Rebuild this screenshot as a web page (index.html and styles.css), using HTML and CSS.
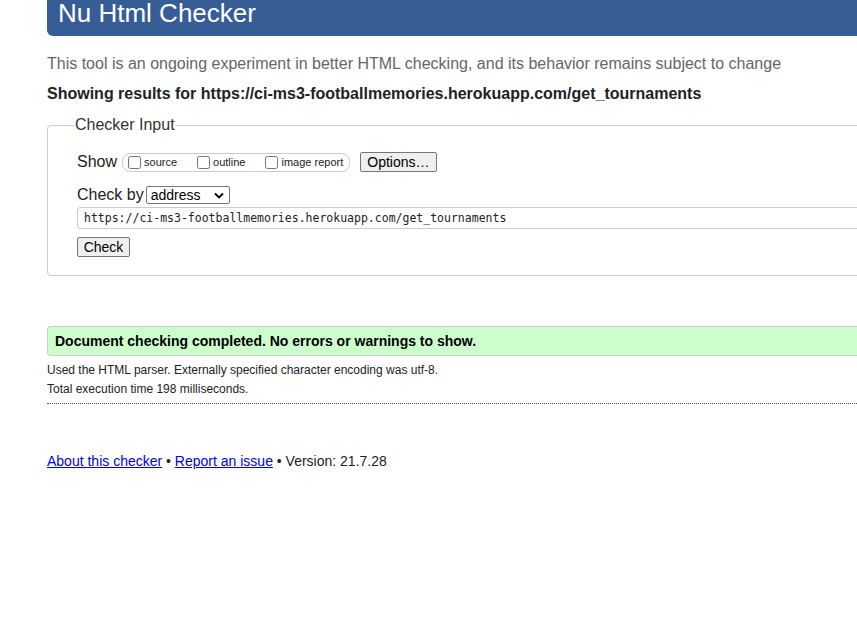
FILE: index.html
```html
<!DOCTYPE html>
<html>
<head>
<meta charset="utf-8">
<title>Nu Html Checker</title>
<link rel="stylesheet" href="styles.css">
</head>
<body>
<div class="page">
  <header class="masthead"><h1>Nu Html Checker</h1></header>
  <p class="intro">This tool is an ongoing experiment in better HTML checking, and its behavior remains subject to change</p>
  <p class="showing">Showing results for https://ci-ms3-footballmemories.herokuapp.com/get_tournaments</p>
  <fieldset class="input">
    <legend>Checker Input</legend>
    <div class="row show-row">
      <span class="lbl">Show</span>
      <span class="opts">
        <label class="opt"><input type="checkbox"><span>source</span></label>
        <label class="opt"><input type="checkbox"><span>outline</span></label>
        <label class="opt last"><input type="checkbox"><span>image report</span></label>
      </span>
      <button class="btn options">Options…</button>
    </div>
    <div class="row by-row">
      <span class="lbl">Check by</span>
      <span class="select">address<svg width="10" height="7" viewBox="0 0 10 7"><path d="M1 1.5 L5 5.5 L9 1.5" fill="none" stroke="#000" stroke-width="1.8"/></svg></span>
    </div>
    <div class="url">https://ci-ms3-footballmemories.herokuapp.com/get_tournaments</div>
    <button class="btn check">Check</button>
  </fieldset>
  <div class="success">Document checking completed. No errors or warnings to show.</div>
  <p class="details">Used the HTML parser. Externally specified character encoding was utf-8.</p>
  <p class="details">Total execution time 198 milliseconds.</p>
  <hr class="dots">
  <p class="footer"><a href="#">About this checker</a> • <a href="#">Report an issue</a> • Version: 21.7.28</p>
</div>
</body>
</html>
```
FILE: styles.css
```css
html, body { margin: 0; padding: 0; background: #fff; }
body { overflow: hidden; font-family: "Liberation Sans", Arial, sans-serif; color: #222; }
.page { margin-left: 47px; width: 1000px; }
.masthead { background: #365d95; height: 36px; border-bottom-left-radius: 6px; }
.masthead h1 { margin: 0; padding-left: 11px; font-size: 26px; line-height: 26px; font-weight: normal; color: #fff; }
.intro { margin: 19px 0 0; font-size: 16px; line-height: 18px; color: #666; }
.showing { margin: 12px 0 0; font-size: 16px; line-height: 18px; font-weight: bold; color: #222; }
.input { margin: 13px 0 0; padding: 14px 0 18px 29px; border: 1px solid #ccc; border-radius: 4px; }
.input legend { padding: 0 1px; font-size: 16px; color: #333; margin-left: -3px; }
.row { display: flex; align-items: center; }
.lbl { font-size: 16px; color: #222; }
.show-row { height: 20px; margin-top: 4px; }
.opts { display: flex; align-items: center; margin-left: 5px; height: 17px; border: 1px solid #ccc; border-radius: 8px; padding: 0 6px 0 2px; }
.opt { display: flex; align-items: center; font-size: 11px; color: #222; margin-right: 17px; }
.opt.last { margin-right: 0; }
.opt input { margin: 0 3px 0 3px; width: 13px; height: 13px; }
.btn { font-family: "Liberation Sans", Arial, sans-serif; font-size: 14px; color: #000; background: #efefef; border: 1px solid #767676; border-radius: 2px; padding: 0 7px; height: 20px; line-height: 18px; }
.options { margin-left: 10px; padding: 0 6px; }
.by-row { margin-top: 14px; height: 18px; }
.select { display: inline-flex; align-items: center; justify-content: space-between; margin-left: 2px; width: 84px; height: 18px; box-sizing: border-box; border: 1px solid #767676; border-radius: 2px; padding: 0 5px 0 4px; font-size: 14px; color: #000; }
.url { margin-top: 3px; height: 22px; box-sizing: border-box; border: 1px solid #ccc; border-right: none; border-radius: 4px 0 0 4px; padding: 0 0 0 6px; font-family: "DejaVu Sans Mono", "Liberation Mono", monospace; font-size: 11.5px; line-height: 20px; color: #222; }
.check { display: block; margin-top: 8px; width: 53px; padding: 0; }
.success { margin-top: 50px; height: 30px; box-sizing: border-box; background: #ccffcc; border: 1px solid #ccc; border-right: none; border-radius: 4px 0 0 4px; padding-left: 7px; font-size: 14px; font-weight: bold; line-height: 29px; color: #000; }
.details { margin: 0; font-size: 12px; line-height: 19px; color: #222; }
.success + .details { margin-top: 5px; }
.dots { margin: 4px 0 0; border: none; border-top: 1px dotted #555; height: 0; }
.footer { margin: 49px 0 0; font-size: 14px; color: #222; }
.footer a { color: #00e; }
```
